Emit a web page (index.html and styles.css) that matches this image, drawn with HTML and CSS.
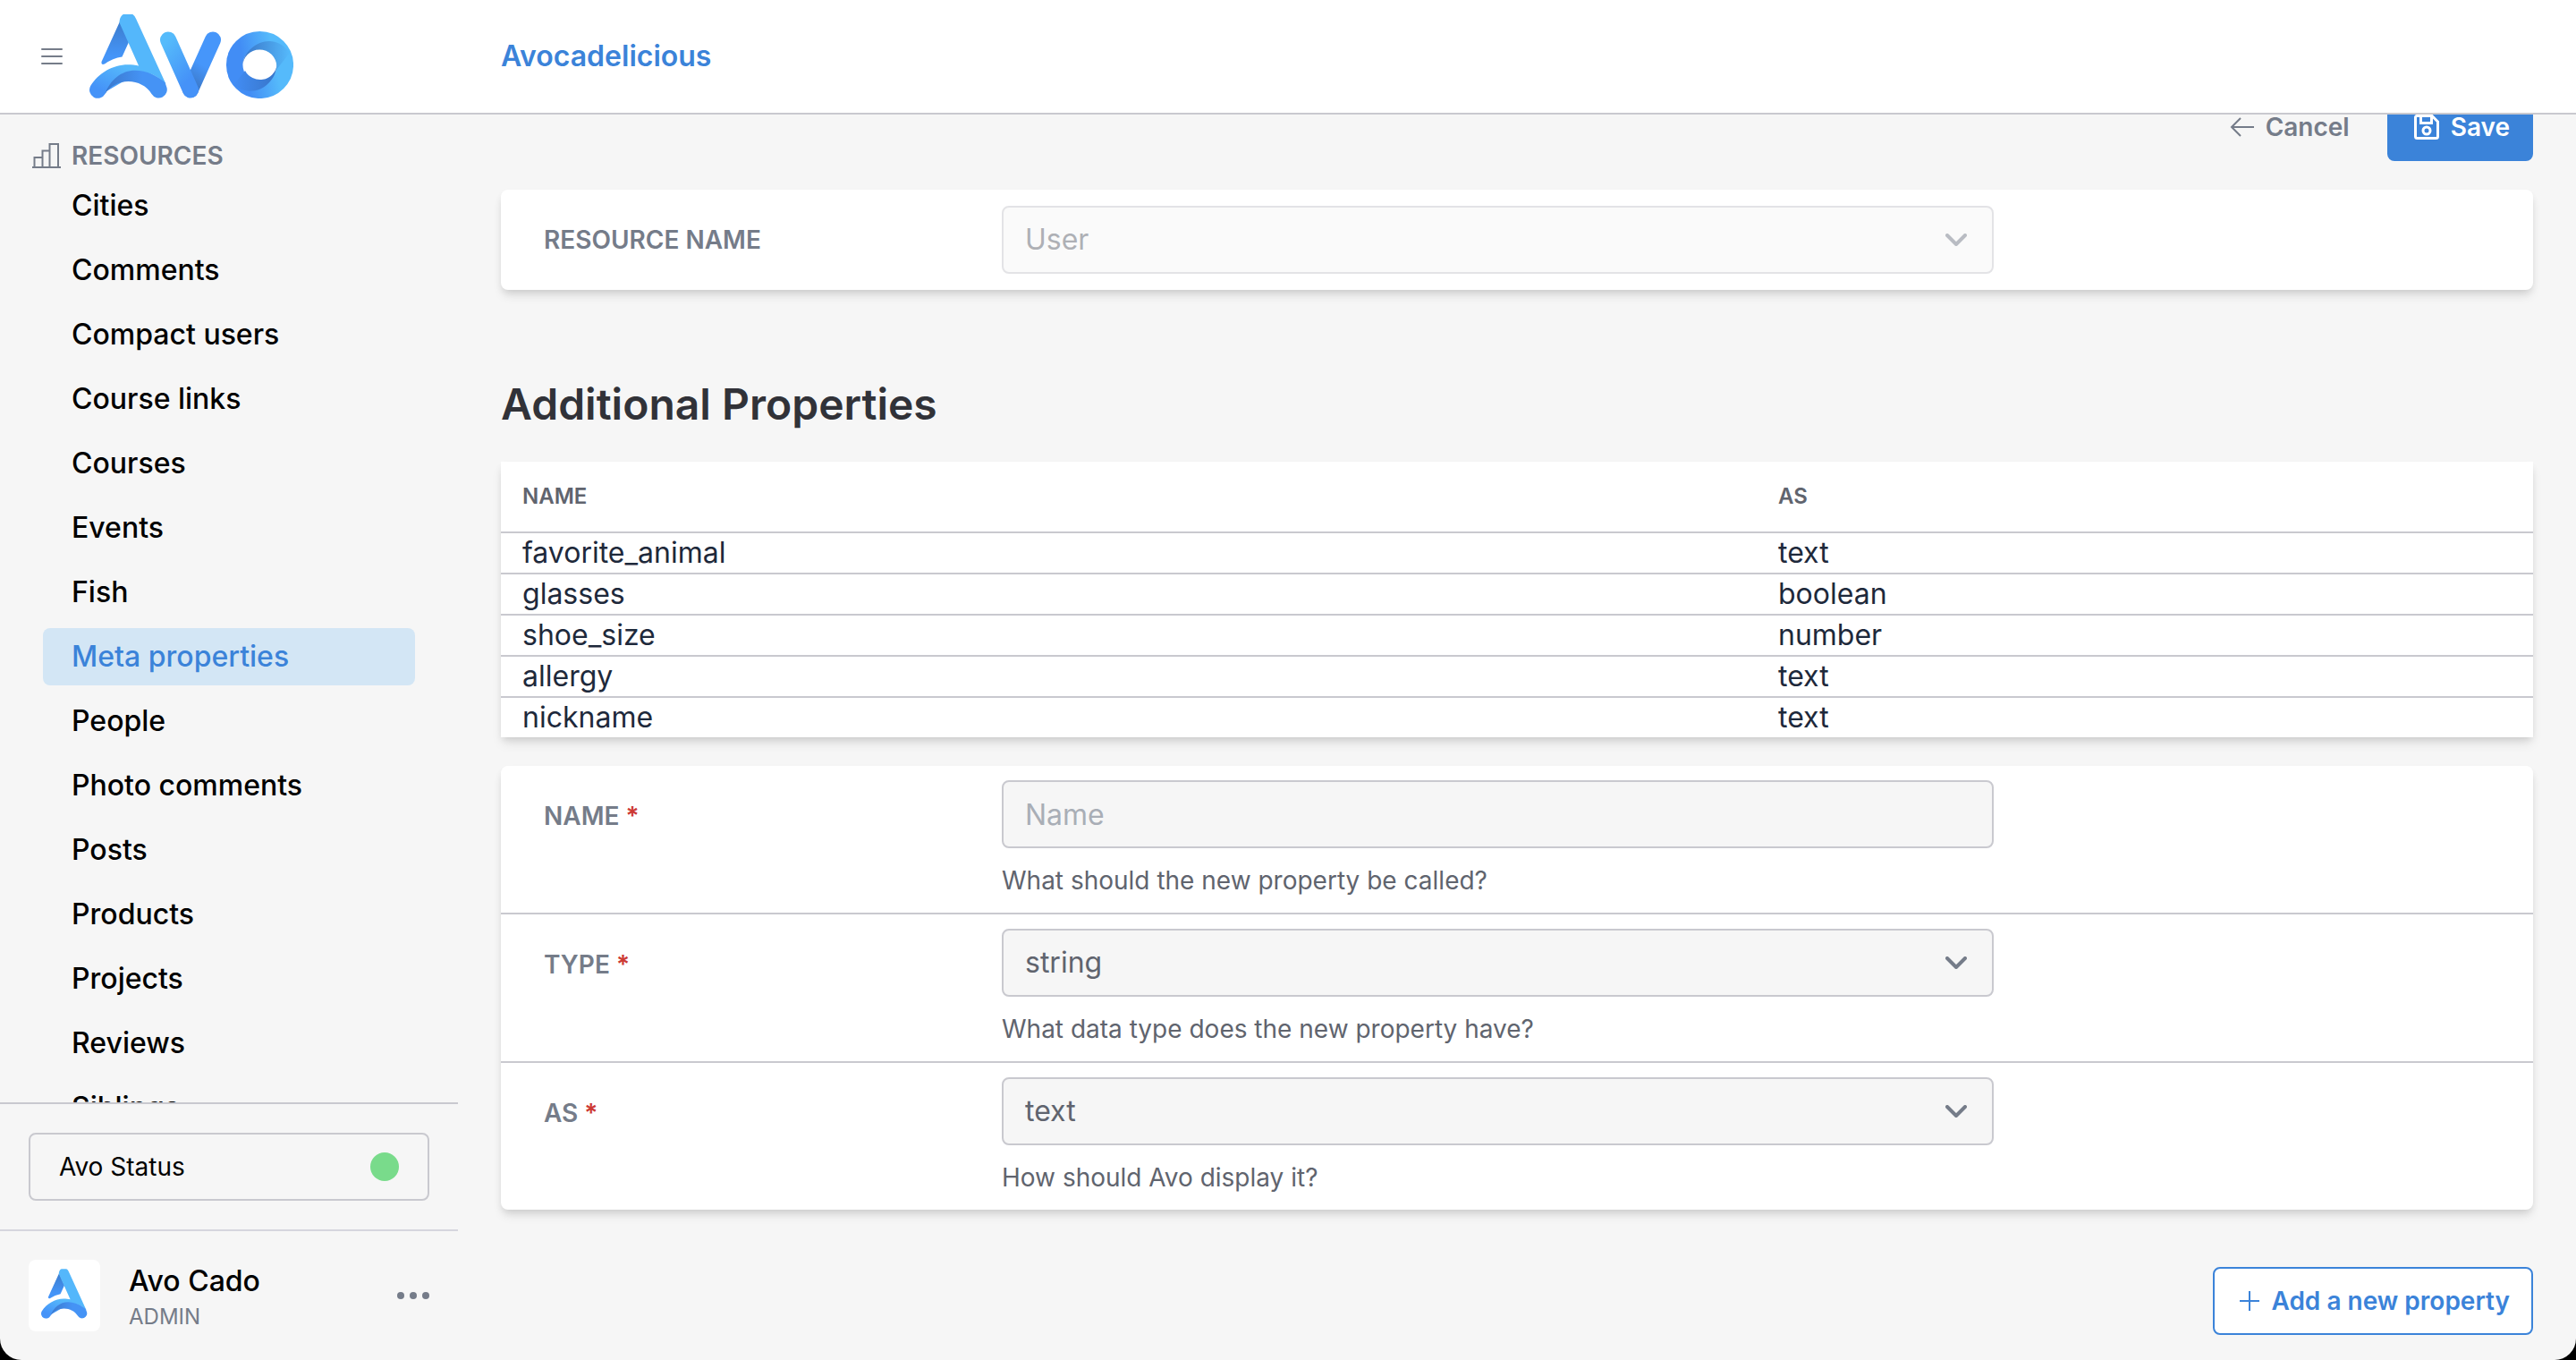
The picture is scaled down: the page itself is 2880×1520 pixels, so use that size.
FILE: index.html
```html
<!DOCTYPE html>
<html lang="en">
<head>
<meta charset="utf-8">
<title>Avocadelicious</title>
<meta name="viewport" content="width=device-width, initial-scale=1">
<link rel="stylesheet" href="styles.css">
</head>
<body>
<svg class="defs" aria-hidden="true">
  <defs>
    <linearGradient id="g-leg" x1="0" y1="0" x2="0" y2="1"><stop offset="0.1" stop-color="#3d7fd2"/><stop offset="0.8" stop-color="#4595f8"/></linearGradient>
    <linearGradient id="g-arc" x1="0" y1="1" x2="1" y2="0"><stop offset="0.2" stop-color="#4593f8"/><stop offset="0.7" stop-color="#55b8fb"/></linearGradient>
    <linearGradient id="g-foot" x1="0" y1="0" x2="1" y2="0"><stop offset="0" stop-color="#3a78cc"/><stop offset="0.6" stop-color="#4593f5"/></linearGradient>
    <linearGradient id="g-v" x1="0" y1="0" x2="0.5" y2="1"><stop offset="0" stop-color="#55bbfb"/><stop offset="1" stop-color="#4592f8"/></linearGradient>
    <linearGradient id="g-vr" x1="0" y1="1" x2="0.3" y2="0"><stop offset="0.1" stop-color="#3c79c9"/><stop offset="0.6" stop-color="#4696fa"/></linearGradient>
    <linearGradient id="g-o" x1="0" y1="0.6" x2="1" y2="0.4"><stop offset="0.2" stop-color="#428df5"/><stop offset="0.8" stop-color="#55bafb"/></linearGradient>
    <linearGradient id="g-otop" x1="0" y1="0" x2="1" y2="0"><stop offset="0" stop-color="#3875c8"/><stop offset="1" stop-color="#55b9fb"/></linearGradient>
    <linearGradient id="g-obot" x1="0" y1="0" x2="1" y2="0"><stop offset="0" stop-color="#428df5"/><stop offset="1" stop-color="#3875c8"/></linearGradient>
    <symbol id="mark-a" viewBox="0 0 88 94">
      <path fill="url(#g-leg)" d="M34 8 L13.500 53 Q13 57 17 55.500 Q26 49 36.500 47.500 L44 31Z"/>
      <path fill="url(#g-arc)" d="M1.200 80 C10 66 26 56.300 43 56.300 C47 56.300 51 56.800 56 57.700 L84 76 L50 68 L19 86 L17.500 89 A9.300 9.300 0 0 1 1.200 80Z"/>
      <path fill="#54b7fb" d="M33.800 10 A9.500 9.500 0 0 1 52.200 5.300 L85.500 78 C76 68 62 62 50 63 L55.500 58.500Z"/>
      <path fill="url(#g-foot)" d="M17.500 89 C23 73 36 62.700 51 62.700 C64 62.700 76 69 84.500 76 L86 80.500 A9.300 9.300 0 0 1 69.500 89 C64 80 54 75 43.500 75 C33 75 23 80 17.500 89Z"/>
    </symbol>
  </defs>
</svg>
<div class="app">
  <header class="topbar">
    <div class="brand">
      <button class="icon-button" type="button" aria-label="Toggle sidebar">
        <svg class="menu-icon" viewBox="0 0 24 20"><path d="M1 2h22M1 10h22M1 18h22"/></svg>
      </button>
      <a href="#" aria-label="Avo home">
        <svg class="logo" viewBox="0 0 228 94">
          <use href="#mark-a" width="88" height="94"/>
          <path stroke="url(#g-vr)" stroke-width="18" stroke-linecap="round" fill="none" d="M138 28.500 L113 84"/>
          <path stroke="url(#g-v)" stroke-width="18" stroke-linecap="round" fill="none" d="M88 28.500 L113 84.500"/>
          <circle cx="190.500" cy="56.500" r="28.300" fill="none" stroke="url(#g-o)" stroke-width="18.500"/>
          <path fill="url(#g-otop)" d="M171.500 55 C174 35 205 17 224 43 L209 62 A19 19 0 0 0 171.500 55Z"/>
          <path fill="url(#g-obot)" d="M209.500 57 C208 78 184 96 161 79 L174 63 A19 19 0 0 0 209.500 57Z"/>
        </svg>
      </a>
    </div>
    <a class="site-name" href="#">Avocadelicious</a>
  </header>
  <div class="body">
    <aside class="sidebar">
      <nav class="nav" aria-label="Resources">
        <h2 class="nav-title">
          <svg class="chart-icon" viewBox="0 0 32 28"><path d="M0 27h32M2.500 27V16h9v11M11.500 27V8.500h8V27M19.500 27V1h9.500v26"/></svg>
          RESOURCES
        </h2>
        <ul class="nav-list">
          <li><a class="nav-link" href="#">Cities</a></li>
          <li><a class="nav-link" href="#">Comments</a></li>
          <li><a class="nav-link" href="#">Compact users</a></li>
          <li><a class="nav-link" href="#">Course links</a></li>
          <li><a class="nav-link" href="#">Courses</a></li>
          <li><a class="nav-link" href="#">Events</a></li>
          <li><a class="nav-link" href="#">Fish</a></li>
          <li><a class="nav-link is-active" href="#" aria-current="page">Meta properties</a></li>
          <li><a class="nav-link" href="#">People</a></li>
          <li><a class="nav-link" href="#">Photo comments</a></li>
          <li><a class="nav-link" href="#">Posts</a></li>
          <li><a class="nav-link" href="#">Products</a></li>
          <li><a class="nav-link" href="#">Projects</a></li>
          <li><a class="nav-link" href="#">Reviews</a></li>
          <li><a class="nav-link" href="#">Siblings</a></li>
        </ul>
      </nav>
      <div class="status-panel">
        <a class="status" href="#">Avo Status <span class="status-dot"></span></a>
      </div>
      <div class="profile">
        <span class="avatar"><svg class="avatar-mark" viewBox="0 0 88 94"><use href="#mark-a" width="88" height="94"/></svg></span>
        <div class="profile-text">
          <span class="profile-name">Avo Cado</span>
          <span class="profile-role">ADMIN</span>
        </div>
        <button class="icon-button" type="button" aria-label="Profile menu">
          <svg class="dots-icon" viewBox="0 0 36 8"><circle cx="4" cy="4" r="4"/><circle cx="18" cy="4" r="4"/><circle cx="32" cy="4" r="4"/></svg>
        </button>
      </div>
    </aside>
    <main class="content">
      <div class="toolbar">
        <a class="cancel" href="#">
          <svg class="arrow-icon" viewBox="0 0 28 24"><path d="M27 12H2M12 2L2 12l10 10"/></svg>
          Cancel
        </a>
        <button class="button button-primary" type="submit" form="property-form">
          <svg class="save-icon" viewBox="0 0 28 28"><path d="M3 1.500h17L26.500 8v16.500a2 2 0 0 1-2 2h-21a2 2 0 0 1-2-2v-21.500a1.500 1.500 0 0 1 1.500-1.500zM7.500 2v7.500h12V2"/><circle cx="14" cy="18" r="4"/></svg>
          Save
        </button>
      </div>
      <section class="card">
        <div class="field field-single">
          <label class="label" for="resource">RESOURCE NAME</label>
          <div class="control is-disabled">
            <select class="input" id="resource" disabled><option>User</option></select>
            <svg class="chevron" viewBox="0 0 24 14"><path d="M2 2l10 10L22 2"/></svg>
          </div>
        </div>
      </section>
      <h1 class="title">Additional Properties</h1>
      <table class="table">
        <thead><tr><th class="col-name">NAME</th><th>AS</th></tr></thead>
        <tbody>
          <tr><td>favorite_animal</td><td>text</td></tr>
          <tr><td>glasses</td><td>boolean</td></tr>
          <tr><td>shoe_size</td><td>number</td></tr>
          <tr><td>allergy</td><td>text</td></tr>
          <tr><td>nickname</td><td>text</td></tr>
        </tbody>
      </table>
      <form class="card" id="property-form">
        <div class="field">
          <label class="label" for="name">NAME <span class="required">*</span></label>
          <div class="control">
            <input class="input" id="name" type="text" placeholder="Name" aria-describedby="name-help">
            <p class="help" id="name-help">What should the new property be called?</p>
          </div>
        </div>
        <div class="field">
          <label class="label" for="type">TYPE <span class="required">*</span></label>
          <div class="control">
            <select class="input" id="type" aria-describedby="type-help"><option>string</option></select>
            <svg class="chevron" viewBox="0 0 24 14"><path d="M2 2l10 10L22 2"/></svg>
            <p class="help" id="type-help">What data type does the new property have?</p>
          </div>
        </div>
        <div class="field">
          <label class="label" for="as">AS <span class="required">*</span></label>
          <div class="control">
            <select class="input" id="as" aria-describedby="as-help"><option>text</option></select>
            <svg class="chevron" viewBox="0 0 24 14"><path d="M2 2l10 10L22 2"/></svg>
            <p class="help" id="as-help">How should Avo display it?</p>
          </div>
        </div>
      </form>
      <div class="actions">
        <button class="button button-outline" type="button">
          <svg class="plus-icon" viewBox="0 0 22 22"><path d="M11 0v22M0 11h22"/></svg>
          Add a new property
        </button>
      </div>
    </main>
  </div>
</div>
</body>
</html>
```
FILE: styles.css
```css
:root {
  --blue: #3b83d9;
  --gray: #757c89;
  --gray-dark: #60646e;
  --line: #c9c9cf;
  --surface: #f6f6f6;
}

* { box-sizing: border-box; }

body {
  margin: 0;
  background: #000;
  color: #000;
  font: 400 32px/40px Inter, "Liberation Sans", sans-serif;
}

a { color: inherit; text-decoration: none; }
h1, h2, p, ul { margin: 0; padding: 0; }
svg { display: block; flex: none; fill: none; stroke: currentColor; stroke-width: 2; }

.defs { position: absolute; width: 0; height: 0; }

.app {
  display: flex;
  flex-direction: column;
  height: 100vh;
  overflow: hidden;
  background: var(--surface);
  border-radius: 0 0 24px 24px;
}

.topbar {
  position: relative;
  z-index: 1;
  display: flex;
  flex: none;
  align-items: center;
  height: 128px;
  background: #fff;
  border-bottom: 2px solid var(--line);
}
.brand {
  display: flex;
  align-items: center;
  gap: 30px;
  width: 560px;
  padding-left: 46px;
}
.icon-button {
  padding: 0;
  border: 0;
  background: none;
  color: var(--gray);
}
.menu-icon { width: 24px; height: 20px; stroke-linecap: round; }
.logo { width: 228px; height: 94px; stroke: none; }
.site-name { color: var(--blue); font-weight: 600; }

.body { display: flex; flex: 1; min-height: 0; }

.sidebar {
  display: flex;
  flex: none;
  flex-direction: column;
  width: 512px;
}
.nav { flex: 1; min-height: 0; padding: 26px 48px 0 36px; overflow: hidden; }
.nav-title {
  display: flex;
  align-items: center;
  gap: 12px;
  color: var(--gray);
  font-size: 28px;
  font-weight: 600;
}
.chart-icon { width: 32px; height: 28px; }
.nav-list {
  display: flex;
  flex-direction: column;
  gap: 8px;
  margin: 4px 0 0 12px;
  list-style: none;
}
.nav-link {
  display: block;
  padding: 12px 32px;
  border-radius: 8px;
  font-weight: 500;
}
.is-active { background: #d3e6f5; color: var(--blue); }

.status-panel { padding: 32px; border-top: 2px solid var(--line); }
.status {
  display: flex;
  align-items: center;
  justify-content: space-between;
  height: 76px;
  padding: 0 32px;
  border: 2px solid var(--line);
  border-radius: 8px;
  font-size: 28px;
}
.status-dot { width: 32px; height: 32px; border-radius: 50%; background: #79db8b; }

.profile {
  display: flex;
  align-items: center;
  gap: 32px;
  padding: 32px;
  border-top: 2px solid #d6d6de;
}
.avatar {
  display: flex;
  justify-content: center;
  width: 80px;
  height: 80px;
  padding-top: 10px;
  border-radius: 8px;
  background: #fff;
}
.avatar-mark { width: 52px; height: 56px; stroke: none; }
.profile-text { display: flex; flex: 1; flex-direction: column; }
.profile-name { font-weight: 500; line-height: 48px; }
.profile-role { color: var(--gray); font-size: 24px; line-height: 32px; }
.dots-icon { width: 36px; height: 8px; fill: currentColor; stroke: none; }

.content { flex: 1; min-width: 0; padding: 0 48px 28px; }

.toolbar {
  display: flex;
  align-items: center;
  justify-content: flex-end;
  gap: 42px;
  margin: -24px 0 32px;
}
.cancel {
  display: flex;
  align-items: center;
  gap: 12px;
  color: var(--gray);
  font-size: 28px;
  font-weight: 600;
}
.arrow-icon { width: 28px; height: 24px; }

.button {
  display: flex;
  align-items: center;
  gap: 13px;
  height: 76px;
  padding: 0 24px 0 28px;
  border: 2px solid var(--blue);
  border-radius: 8px;
  font: inherit;
  font-size: 28px;
  font-weight: 600;
}
.button-primary { background: var(--blue); color: #fff; }
.button-outline { background: #fff; color: var(--blue); }
.save-icon { width: 28px; height: 28px; stroke-width: 3; }
.plus-icon { width: 22px; height: 22px; }

.card, .table {
  background: #fff;
  box-shadow: 0 8px 12px -2px rgb(0 0 0 / 10%), 0 4px 8px -2px rgb(0 0 0 / 10%);
}
.card { border-radius: 8px; }

.field {
  display: grid;
  grid-template-columns: 512px minmax(0, 1109px);
  padding: 16px 48px;
}
.field + .field { border-top: 2px solid var(--line); }
.label {
  height: 76px;
  color: var(--gray);
  font-size: 28px;
  font-weight: 600;
  line-height: 80px;
}
.field-single { padding-block: 18px; }
.field-single .label { line-height: 76px; }
.required { color: #cd3a34; }
.control { position: relative; }
.input {
  display: block;
  width: 100%;
  height: 76px;
  padding: 0 24px;
  border: 2px solid var(--line);
  border-radius: 8px;
  appearance: none;
  background: var(--surface);
  color: var(--gray-dark);
  font: inherit;
}
.input::placeholder { color: #a9aeb6; opacity: 1; }
.is-disabled { opacity: 0.5; }
.input:disabled { opacity: 1; }
.chevron {
  position: absolute;
  top: 31px;
  right: 30px;
  width: 24px;
  height: 14px;
  color: var(--gray);
  stroke-width: 4;
  stroke-linecap: round;
  stroke-linejoin: round;
  pointer-events: none;
}
.help {
  margin-top: 16px;
  color: var(--gray-dark);
  font-size: 28px;
}

.title {
  margin: 100px 0 36px;
  color: #313238;
  font-size: 48px;
  font-weight: 600;
  line-height: 56px;
}

.table {
  width: 100%;
  margin-bottom: 32px;
  border-spacing: 0;
  color: #1e293b;
  table-layout: fixed;
}
.table th, .table td { padding: 2px 24px; text-align: left; }
.table th {
  height: 78px;
  color: var(--gray-dark);
  font-size: 24px;
  font-weight: 600;
}
.table td { border-top: 2px solid var(--line); }
.col-name { width: 1404px; }

.actions { display: flex; justify-content: flex-end; margin-top: 64px; }
```
